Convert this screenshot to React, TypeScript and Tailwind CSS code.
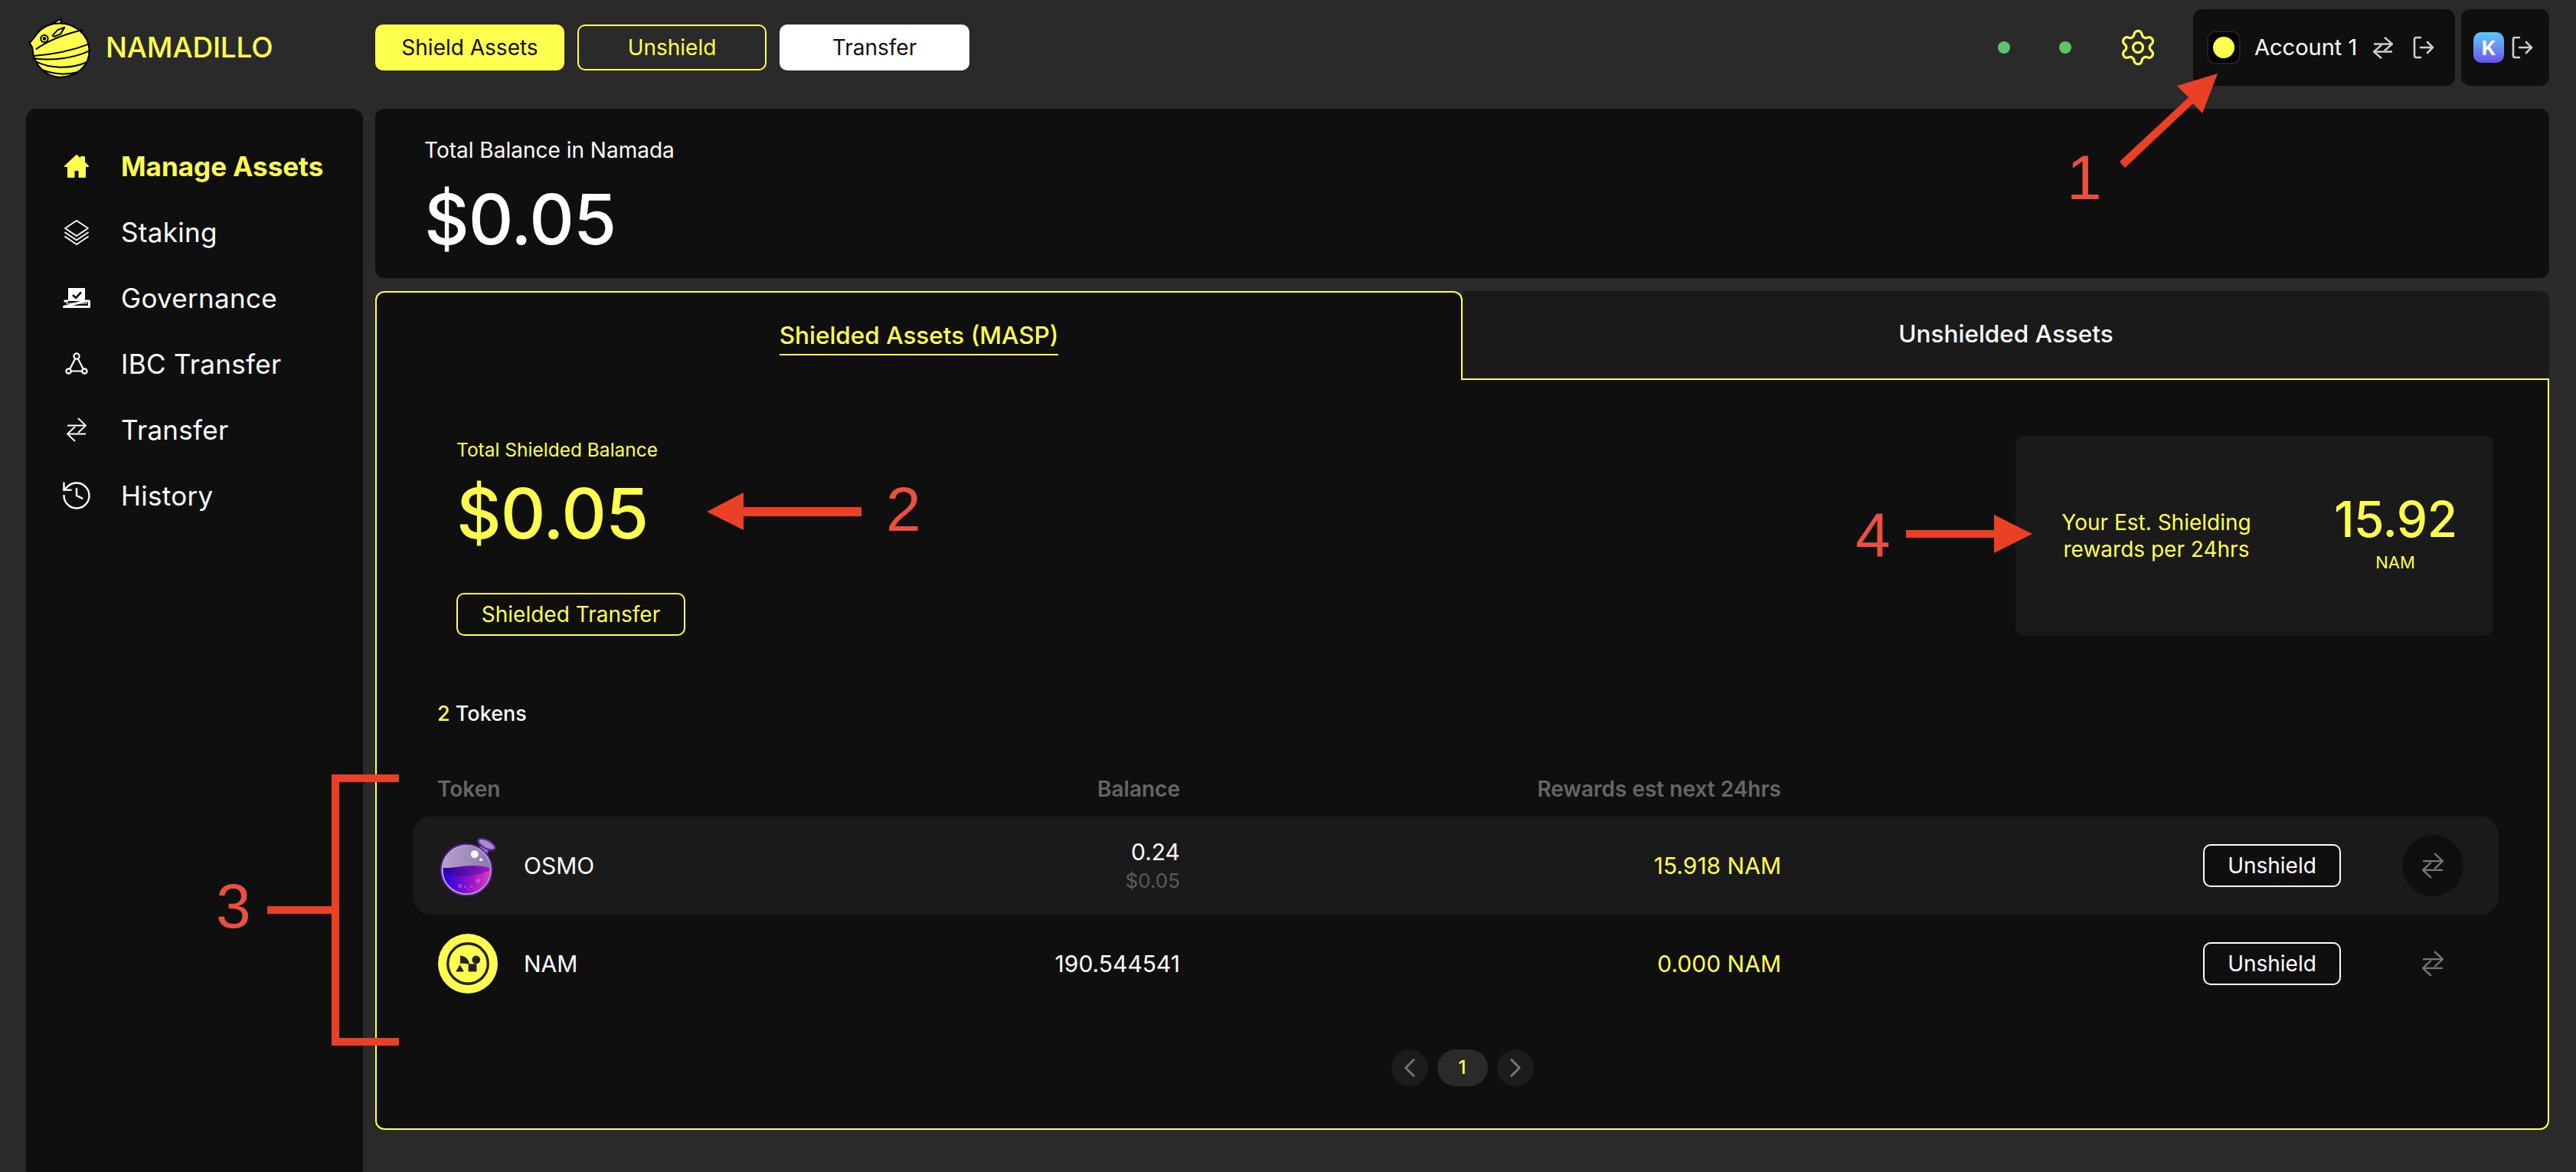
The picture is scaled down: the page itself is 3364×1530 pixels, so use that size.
import React from "react";
import { History, Settings, ChevronLeft, ChevronRight } from "lucide-react";

const Y = "#ffff50";

function Logo() {
  return (
    <svg width="84" height="82" viewBox="38 30 250 245" fill={Y} stroke="#000" strokeWidth="6" strokeLinejoin="round" strokeLinecap="round">
      <path d="M135 58 L170 40 L166 60 Z" />
      <path d="M45 135 C 70 112, 80 72, 140 60 C 215 48, 275 100, 278 160 C 282 225, 225 270, 160 268 C 110 265, 70 225, 60 180 L 56 152 Z" />
      <path d="M135 106 L155 84 L182 74 L166 100 L142 110 Z" />
      <circle cx="103" cy="118" r="14" fill="none" />
      <circle cx="103" cy="118" r="7" fill="#000" stroke="none" />
      <path d="M72 158 C 120 125 185 100 252 84" fill="none" />
      <path d="M60 185 C 130 180 210 165 274 140" fill="none" />
      <path d="M62 195 C 130 205 220 195 280 165" fill="none" />
      <path d="M72 208 C 120 232 200 240 268 210" fill="none" />
      <path d="M92 238 C 130 255 190 262 235 248" fill="none" />
    </svg>
  );
}

function HomeIcon() {
  return (
    <svg width="32" height="30" viewBox="0 0 32 30" fill={Y} stroke={Y} strokeWidth="2" strokeLinejoin="round">
      <path d="M16 1 L22 6.5 V3 H26 V10 L31 15 H27 V29 H19.5 V20 H12.5 V29 H5 V15 H1 Z" />
    </svg>
  );
}
function LayersIcon() {
  return (
    <svg width="32" height="33" viewBox="0 0 32 33" fill="none" stroke="#fff" strokeWidth="1.8" strokeLinejoin="round" strokeLinecap="round">
      <path d="M16 1 L31 11 L16 21 L1 11 Z" />
      <path d="M1 16.5 L16 26.5 L31 16.5" />
      <path d="M1 22 L16 32 L31 22" />
    </svg>
  );
}
function VoteIcon() {
  return (
    <svg width="36" height="26" viewBox="0 0 36 26">
      <path d="M7 0 H29 V17 H7 Z" fill="#fff" />
      <path d="M13 9 L17 13 L24 5.5" fill="none" stroke="#0f0f0f" strokeWidth="2.6" />
      <path d="M1.5 17 H7 M29 17 H34.5 V24.5 H1.5 Z" fill="none" stroke="#fff" strokeWidth="3" strokeLinejoin="round" />
      <path d="M4 20 H32" stroke="#fff" strokeWidth="1" />
    </svg>
  );
}
function IbcIcon() {
  return (
    <svg width="30" height="30" viewBox="0 0 30 30" fill="none" stroke="#fff" strokeWidth="2.2">
      <circle cx="15" cy="5" r="3.6" />
      <circle cx="4.6" cy="24.5" r="3.2" />
      <circle cx="25.4" cy="24.5" r="3.2" />
      <path d="M13.2 8.2 L6.4 21.6 M16.8 8.2 L23.6 21.6 M7.8 24.5 H22.2" />
    </svg>
  );
}
function SwapIcon({ size = 26, height, color = "#fff", w = 1.8 }: { size?: number; height?: number; color?: string; w?: number }) {
  return (
    <svg width={size} height={height ?? (size * 32) / 26} viewBox="0 0 26 32" preserveAspectRatio="none" fill="none" stroke={color} strokeWidth={w}>
      <path d="M1 10.5 H25 M15 1 L25 10.5 L15 20" />
      <path d="M25 21.5 H1 M11 12 L1 21.5 L11 31" />
    </svg>
  );
}
function LogoutIcon() {
  return (
    <svg width="28" height="30" viewBox="0 0 28 30" fill="none" stroke="#cfcfcf" strokeWidth="2.6" strokeLinecap="round" strokeLinejoin="round">
      <path d="M10 2 H4.5 A2.5 2.5 0 0 0 2 4.5 V25.5 A2.5 2.5 0 0 0 4.5 28 H10" />
      <path d="M10 15 H26 M19 8 L26 15 L19 22" />
    </svg>
  );
}
function OsmoIcon() {
  return (
    <svg width="77" height="83" viewBox="100 85 230 250">
      <defs>
        <linearGradient id="liq" x1="0" x2="1" y1="0" y2="0">
          <stop offset="0" stopColor="#1a00e6" />
          <stop offset="0.6" stopColor="#9a17c4" />
          <stop offset="1" stopColor="#f03fc0" />
        </linearGradient>
        <linearGradient id="liqTop" x1="0" x2="1" y1="0" y2="0">
          <stop offset="0" stopColor="#20009a" />
          <stop offset="1" stopColor="#a31bc0" />
        </linearGradient>
        <linearGradient id="glass" x1="0" x2="1" y1="0" y2="0">
          <stop offset="0" stopColor="#b5a2cf" />
          <stop offset="1" stopColor="#8f78ad" />
        </linearGradient>
        <clipPath id="ball"><circle cx="208" cy="225" r="92" /></clipPath>
      </defs>
      <g transform="rotate(28 287 125)">
        <rect x="268" y="125" width="38" height="45" fill="#9c82c4" stroke="#5b2a9e" strokeWidth="6" />
        <ellipse cx="287" cy="125" rx="37" ry="16" fill="#a58ccb" stroke="#5b2a9e" strokeWidth="7" />
      </g>
      <circle cx="208" cy="225" r="100" fill="url(#glass)" stroke="#5b219b" strokeWidth="7" />
      <g clipPath="url(#ball)">
        <path d="M110 215 C 160 228, 220 190, 310 222 V330 H110 Z" fill="url(#liqTop)" />
        <path d="M110 232 C 170 262, 240 255, 310 222 V330 H110 Z" fill="url(#liq)" />
      </g>
      <circle cx="208" cy="225" r="96" fill="none" stroke="#cdbfe0" strokeWidth="4" opacity=".7" />
      <circle cx="240" cy="164" r="15" fill="#fff" />
      <circle cx="265" cy="185" r="6" fill="#fff" />
      <g fill="#fff" opacity=".22">
        <circle cx="253" cy="268" r="8" /><circle cx="182" cy="288" r="8" /><circle cx="203" cy="293" r="5" />
        <circle cx="228" cy="291" r="5" /><circle cx="215" cy="303" r="3" /><circle cx="238" cy="301" r="3" />
      </g>
    </svg>
  );
}
function NamIcon() {
  return (
    <svg width="78" height="78" viewBox="100 475 232 232">
      <circle cx="216" cy="591" r="116" fill={Y} />
      <circle cx="216" cy="591" r="78" fill="none" stroke="#222" strokeWidth="10" />
      <g fill="#222">
        <path d="M169 622 L185 595 L201 622 Z" />
        <path d="M218 592 H250 V622 H218 Z" />
        <circle cx="248" cy="576" r="16" />
        <path d="M186 560 C 205 560 220 575 222 592 H205 V590 H186 Z" />
      </g>
    </svg>
  );
}

function Annotations() {
  const digit = "absolute [font-family:'Liberation_Sans',sans-serif] text-[82px] leading-none text-[#e8503f]";
  return (
    <>
      <svg className="absolute inset-0 pointer-events-none" width="3364" height="1530" viewBox="0 0 3364 1530" fill="#ea4025">
        <path d="M2768 211 L2858 127 L2843 112 L2896 96 L2876 148 L2864 135 L2775 219 Z" />
        <path d="M923 668 L971 643 L971 662 L1125 662 L1125 674 L971 674 L971 692 Z" />
        <path d="M2654 697 L2604 672 L2604 692 L2489 692 L2489 702 L2604 702 L2604 722 Z" />
        <path d="M521 1011 H433 V1183 H349 V1193 H433 V1365 H521 V1355 H443 V1021 H521 Z" />
      </svg>
      <span className={`${digit} left-[2699px] top-[191px]`}>1</span>
      <span className={`${digit} left-[1157px] top-[624px]`}>2</span>
      <span className={`${digit} left-[282px] top-[1142px]`}>3</span>
      <span className={`${digit} left-[2423px] top-[658px]`}>4</span>
    </>
  );
}

const nav = [
  { label: "Manage Assets", icon: <HomeIcon />, active: true },
  { label: "Staking", icon: <LayersIcon /> },
  { label: "Governance", icon: <VoteIcon /> },
  { label: "IBC Transfer", icon: <IbcIcon /> },
  { label: "Transfer", icon: <SwapIcon size={26} /> },
  { label: "History", icon: <History size={44} strokeWidth={1.3} /> },
];

function Sidebar() {
  return (
    <aside className="w-[440px] h-[1388px] bg-[#0f0f0f] rounded-t-[14px] pt-[32px]">
      {nav.map((n) => (
        <div key={n.label} className={`h-[86px] flex items-center pl-[44px] gap-[36px] ${n.active ? "text-[#ffff50] font-bold" : "text-white"}`}>
          <span className="flex justify-center items-center w-[44px] shrink-0">{n.icon}</span>
          <span className={`text-[35px] ${n.active ? "tracking-[0px]" : "tracking-[0.3px]"}`}>{n.label}</span>
        </div>
      ))}
    </aside>
  );
}

function TokenRow({ icon, name, amount, usd, reward, highlight }: { icon: React.ReactNode; name: string; amount: string; usd?: string; reward: string; highlight?: boolean }) {
  return (
    <div className={`h-[128px] flex items-center rounded-[24px] ${highlight ? "bg-[#1a1a1a]" : ""}`}>
      <div className="w-[460px] pl-[33px] flex items-center gap-[34px] text-[30px] text-white">
        <span className="w-[78px] flex justify-center">{icon}</span>
        {name}
      </div>
      <div className="w-[542px] text-right text-white text-[30px] leading-[40px]">
        <div>{amount}</div>
        {usd && <div className="text-[26px] leading-[36px] text-[#5a5a5a]">{usd}</div>}
      </div>
      <div className="w-[785px] text-right text-[30px] text-[#ffff50]">{reward}</div>
      <button className="ml-[551px] w-[180px] h-[56px] rounded-[10px] border-2 border-white bg-[#0f0f0f] text-white text-[28px]">Unshield</button>
      <span className={`ml-[80px] w-[80px] h-[80px] rounded-full flex items-center justify-center ${highlight ? "bg-[#0f0f0f]" : ""}`}>
        <SwapIcon size={28} height={34} color="#777" w={2.2} />
      </span>
    </div>
  );
}

export default function App() {
  return (
    <div className="relative w-[3364px] h-[1530px] overflow-hidden bg-[#2a2a2a] [font-family:Inter,sans-serif]">
      <header className="h-[124px] mb-[18px] flex items-center pl-[36px] pr-[35px]">
        <div className="w-[454px] flex items-center gap-[18px]">
          <Logo />
          <span className="text-[37px] font-medium text-[#ffff50] tracking-[-0.2px]">NAMADILLO</span>
        </div>
        <nav className="flex gap-[17px]">
          <button className="w-[247px] h-[60px] rounded-[10px] bg-[#ffff50] text-[#111] text-[28px]">Shield Assets</button>
          <button className="w-[247px] h-[60px] rounded-[10px] border-2 border-[#ffff50] text-[#ffff50] text-[28px]">Unshield</button>
          <button className="w-[248px] h-[60px] rounded-[10px] bg-white text-[#111] text-[28px]">Transfer</button>
        </nav>
        <div className="ml-auto flex items-center">
          <span className="w-[16px] h-[16px] rounded-full bg-[#5cc46a]" />
          <span className="ml-[64px] w-[16px] h-[16px] rounded-full bg-[#5cc46a]" />
          <Settings className="ml-[61px]" size={52} color="#ffff50" strokeWidth={1.5} />
          <div className="ml-[46px] w-[342px] h-[100px] rounded-[12px] bg-[#0f0f0f] flex pt-[28px] pl-[18px]">
            <span className="w-[44px] h-[44px] rounded-[12px] bg-black border-2 border-[#222] flex items-center justify-center">
              <span className="w-[28px] h-[28px] rounded-full bg-[#ffff50]" />
            </span>
            <span className="ml-[18px] text-[29px] leading-[44px] text-white">Account 1</span>
            <span className="ml-[21px] h-[44px] flex items-center"><SwapIcon size={26} height={29} color="#cfcfcf" w={2.6} /></span>
            <span className="ml-[26px] h-[44px] flex items-center"><LogoutIcon /></span>
          </div>
          <div className="ml-[8px] w-[115px] h-[100px] rounded-[12px] bg-[#0f0f0f] flex pt-[30px] pl-[16px] gap-[10px]">
            <span className="w-[40px] h-[40px] rounded-[10px] bg-gradient-to-b from-[#5ac8fa] to-[#6a4fe8] flex items-center justify-center text-white font-bold text-[26px]">K</span>
            <span className="h-[40px] flex items-center"><LogoutIcon /></span>
          </div>
        </div>
      </header>

      <div className="flex gap-[16px] pl-[34px] pr-[35px]">
        <Sidebar />
        <main className="flex-1 flex flex-col gap-[17px]">
          <section className="h-[221px] rounded-[12px] bg-[#0f0f0f] pl-[64px] pt-[36px]">
            <div className="text-[28px] leading-[36px] text-white">Total Balance in Namada</div>
            <div className="text-[91px] leading-[100px] mt-[22px] font-medium text-white tracking-[-1px]">$0.05</div>
          </section>

          <section className="h-[1095px] flex flex-col">
            <div className="flex h-[116px]">
              <div className="w-[1420px] bg-[#0f0f0f] border-2 border-b-0 border-[#ffff50] rounded-t-[12px] flex items-start justify-center pt-[34px]">
                <span className="text-[31.5px] leading-[44px] text-[#ffff50] border-b-2 border-[#ffff50] pb-[2px] font-medium">Shielded Assets (MASP)</span>
              </div>
              <div className="flex-1 bg-[#1a1a1a] border-b-2 border-[#ffff50] rounded-tr-[12px] flex items-start justify-center pt-[34px]">
                <span className="text-[31.5px] leading-[44px] text-white font-medium">Unshielded Assets</span>
              </div>
            </div>

            <div className="flex-1 bg-[#0f0f0f] border-2 border-t-0 border-[#ffff50] rounded-b-[12px] pl-[47px] pr-[64px]">
              <div className="h-[334px] flex items-start justify-between">
                <div className="pl-[57px] pt-[75px]">
                  <div className="text-[24.5px] leading-[32px] text-[#ffff50]">Total Shielded Balance</div>
                  <div className="text-[91px] leading-[100px] mt-[17px] font-medium text-[#ffff50] tracking-[-1px]">$0.05</div>
                  <button className="mt-[54px] w-[299px] h-[56px] rounded-[10px] border-2 border-[#ffff50] text-[#ffff50] text-[28px]">Shielded Transfer</button>
                </div>
                <div className="mt-[73px] mr-[7px] w-[624px] h-[261px] rounded-[12px] bg-[#1a1a1a] flex items-center">
                  <div className="ml-[49px] w-[270px] text-center text-[28px] leading-[35px] text-[#ffff50]">Your Est. Shielding rewards per 24hrs</div>
                  <div className="ml-[97px] w-[160px] text-center text-[#ffff50] -mt-[8px]">
                    <div className="text-[64px] leading-[70px] font-medium tracking-[-0.5px]">15.92</div>
                    <div className="text-[22px] leading-[30px] mt-[6px]">NAM</div>
                  </div>
                </div>
              </div>

              <div className="pl-[32px] pt-[84px] text-[27px] leading-[36px] text-white font-medium">
                <span className="text-[#ffff50]">2</span> Tokens
              </div>

              <div className="mt-[54px] h-[52px] flex items-center text-[28px] font-semibold text-[#666]">
                <div className="w-[460px] pl-[32px]">Token</div>
                <div className="w-[542px] text-right">Balance</div>
                <div className="w-[785px] text-right">Rewards est next 24hrs</div>
              </div>
              <div className="mt-[10px]">
                <TokenRow icon={<OsmoIcon />} name="OSMO" amount="0.24" usd="$0.05" reward="15.918 NAM" highlight />
                <TokenRow icon={<NamIcon />} name="NAM" amount="190.544541" reward="0.000 NAM" />
              </div>

              <div className="mt-[48px] flex justify-center gap-[12px] pl-[17px]">
                <span className="w-[48px] h-[48px] rounded-full bg-[#1c1c1c] flex items-center justify-center text-[#777]"><ChevronLeft size={42} strokeWidth={1.6} /></span>
                <span className="w-[66px] h-[48px] rounded-full bg-[#2a2a2a] flex items-center justify-center text-[#ffff50] text-[24px] font-medium">1</span>
                <span className="w-[48px] h-[48px] rounded-full bg-[#1c1c1c] flex items-center justify-center text-[#777]"><ChevronRight size={42} strokeWidth={1.6} /></span>
              </div>
            </div>
          </section>
        </main>
      </div>

      <Annotations />
    </div>
  );
}
